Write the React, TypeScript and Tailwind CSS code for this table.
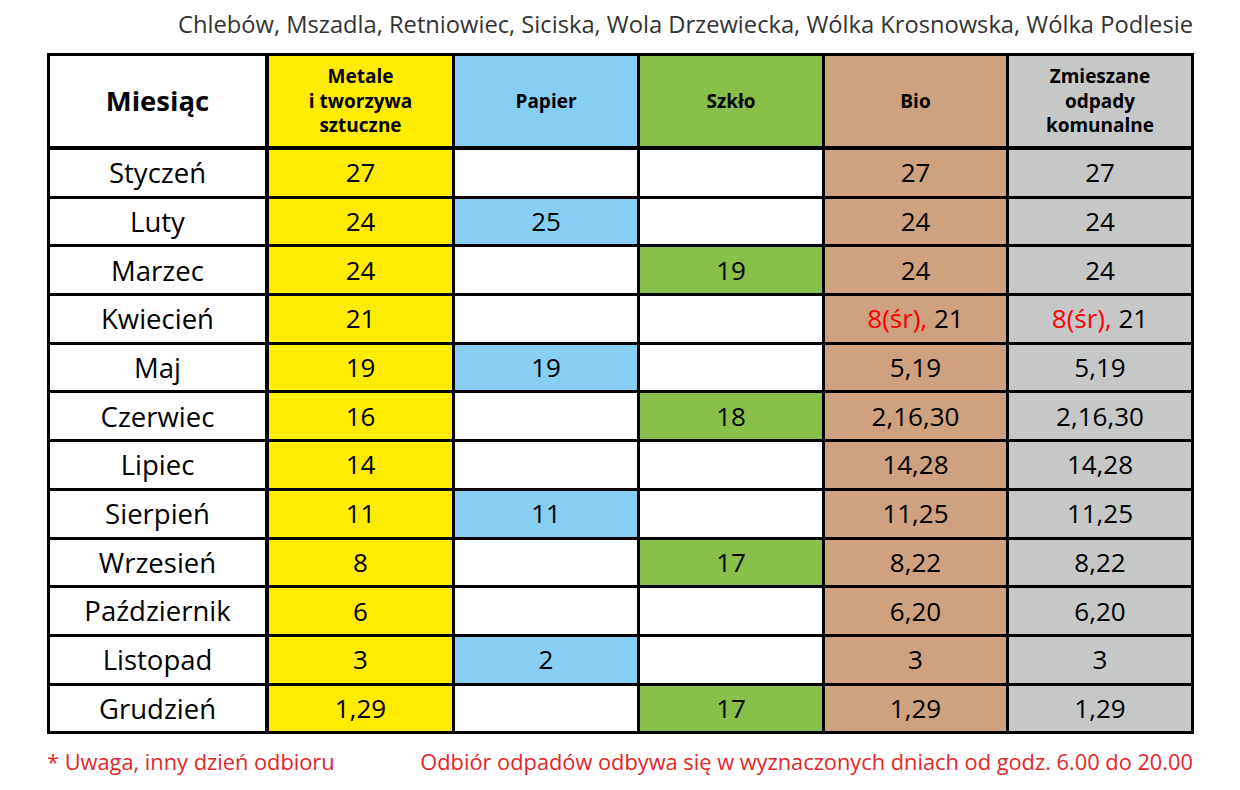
import React from 'react';

type Row = {
  month: string;
  metale: string;
  papier?: string;
  szklo?: string;
  bio: React.ReactNode;
  zmieszane: React.ReactNode;
};

const special = (
  <span>
    <span className="text-[#ff0000]">8(śr),</span>
    {' '}21
  </span>
);

const rows: Row[] = [
  { month: 'Styczeń', metale: '27', bio: '27', zmieszane: '27' },
  { month: 'Luty', metale: '24', papier: '25', bio: '24', zmieszane: '24' },
  { month: 'Marzec', metale: '24', szklo: '19', bio: '24', zmieszane: '24' },
  { month: 'Kwiecień', metale: '21', bio: special, zmieszane: special },
  { month: 'Maj', metale: '19', papier: '19', bio: '5,19', zmieszane: '5,19' },
  { month: 'Czerwiec', metale: '16', szklo: '18', bio: '2,16,30', zmieszane: '2,16,30' },
  { month: 'Lipiec', metale: '14', bio: '14,28', zmieszane: '14,28' },
  { month: 'Sierpień', metale: '11', papier: '11', bio: '11,25', zmieszane: '11,25' },
  { month: 'Wrzesień', metale: '8', szklo: '17', bio: '8,22', zmieszane: '8,22' },
  { month: 'Październik', metale: '6', bio: '6,20', zmieszane: '6,20' },
  { month: 'Listopad', metale: '3', papier: '2', bio: '3', zmieszane: '3' },
  { month: 'Grudzień', metale: '1,29', szklo: '17', bio: '1,29', zmieszane: '1,29' },
];

const cell = 'flex items-center justify-center text-center';

export default function App() {
  return (
    <div className="w-[1240px] h-[790px] bg-white font-['Open_Sans','Liberation_Sans',sans-serif] text-black">
      <div className="pl-[47px] pr-[47px] pt-[7px]">
        {/* Village list */}
        <div className="h-[46px] text-right text-[23.7px] text-[#333]">
          Chlebów, Mszadla, Retniowiec, Siciska, Wola Drzewiecka, Wólka Krosnowska, Wólka Podlesie
        </div>

        {/* Schedule table */}
        <div className="grid w-[1147px] grid-cols-[216px_183px_182px_182px_181px_182px] grid-rows-[91px_repeat(12,45.7px)] gap-[3px] border-[3px] border-black bg-black">
          <div className={`${cell} border-r border-b border-black bg-white text-[27.5px] font-bold`}>Miesiąc</div>
          <div className={`${cell} border-b border-black bg-[#ffec00] text-[19px] font-bold leading-[24.5px]`}>
            Metale
            <br />
            i tworzywa
            <br />
            sztuczne
          </div>
          <div className={`${cell} border-b border-black bg-[#87cef5] text-[19px] font-bold`}>Papier</div>
          <div className={`${cell} border-b border-black bg-[#88c04a] text-[19px] font-bold`}>Szkło</div>
          <div className={`${cell} border-b border-black bg-[#cea17f] text-[19px] font-bold`}>Bio</div>
          <div className={`${cell} border-b border-black bg-[#c6c7c7] text-[19px] font-bold leading-[24.5px]`}>
            Zmieszane
            <br />
            odpady
            <br />
            komunalne
          </div>

          {rows.map((r) => (
            <React.Fragment key={r.month}>
              <div className={`${cell} border-r border-black bg-white text-[27.5px]`}>{r.month}</div>
              <div className={`${cell} bg-[#ffec00] text-[26px]`}>{r.metale}</div>
              <div className={`${cell} ${r.papier ? 'bg-[#87cef5]' : 'bg-white'} text-[26px]`}>{r.papier}</div>
              <div className={`${cell} ${r.szklo ? 'bg-[#88c04a]' : 'bg-white'} text-[26px]`}>{r.szklo}</div>
              <div className={`${cell} bg-[#cea17f] text-[26px]`}>{r.bio}</div>
              <div className={`${cell} bg-[#c6c7c7] text-[26px]`}>{r.zmieszane}</div>
            </React.Fragment>
          ))}
        </div>

        {/* Footnotes */}
        <div className="mt-[12px] flex justify-between text-[21.8px] text-[#e3262a]">
          <span>* Uwaga, inny dzień odbioru</span>
          <span>Odbiór odpadów odbywa się w wyznaczonych dniach od godz. 6.00 do 20.00</span>
        </div>
      </div>
    </div>
  );
}
